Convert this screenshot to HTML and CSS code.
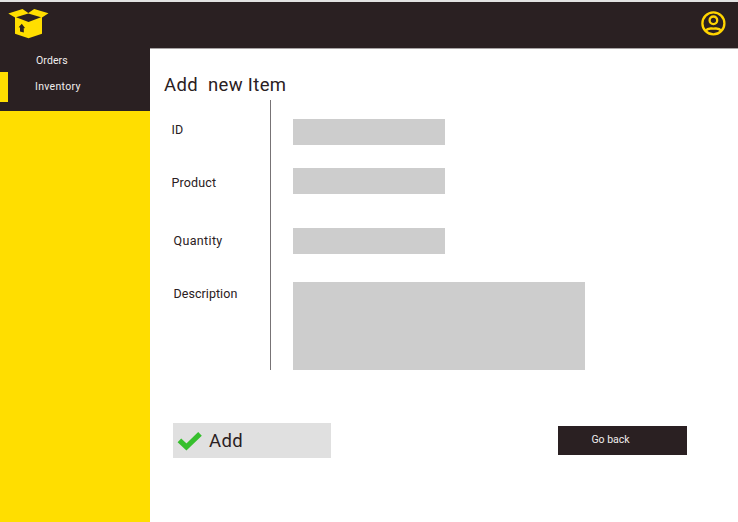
FILE: index.html
```html
<!DOCTYPE html>
<html lang="en">
<head>
<meta charset="utf-8">
<title>Add new Item</title>
<link rel="stylesheet" href="styles.css">
</head>
<body>
<header class="topbar">
  <svg class="logo" width="42" height="32" viewBox="0 0 42 32">
    <path fill="#ffde00" d="M0.3 5.6 14.5 1 20.3 5 26.2 1 40.5 5.2 34 9.5V25.8L20.5 30.3 7 25.8V9.5Z"/>
    <path fill="#2a2022" d="M8 9.3 20.3 5.4 33 9.3 20.5 14Z"/>
    <path fill="#2a2022" d="M13.8 15.8 17.2 20.2 15.8 20V24.4L12 23.6V19.4L10.6 19.2Z"/>
  </svg>
  <svg class="user" width="26" height="26" viewBox="0 0 26 26" fill="none" stroke="#ffd400" stroke-width="2.3">
    <circle cx="13.4" cy="13.4" r="11"/>
    <circle cx="13.4" cy="10.3" r="3.8"/>
    <path d="M5.8 20.5C7.9 17.6 10.4 18.6 13.4 18.6S18.9 17.6 21 20.5"/>
  </svg>
</header>
<div class="layout">
  <aside class="sidebar">
    <nav class="nav">
      <a class="nav-item orders">Orders</a>
      <a class="nav-item inventory active">Inventory</a>
    </nav>
  </aside>
  <main class="main">
    <h1 class="title">Add&nbsp; new Item</h1>
    <form class="form">
      <div class="labels">
        <label class="label id" for="id">ID</label>
        <label class="label product" for="product">Product</label>
        <label class="label quantity" for="quantity">Quantity</label>
        <label class="label description" for="description">Description</label>
      </div>
      <div class="fields">
        <input class="field" id="id">
        <input class="field second" id="product">
        <input class="field third" id="quantity">
        <textarea class="field area" id="description"></textarea>
      </div>
    </form>
    <div class="actions">
      <button class="add"><svg width="26" height="20" viewBox="0 0 26 20"><path d="M2.4 9.4 9.4 16 23 2.9" fill="none" stroke="#36bf2d" stroke-width="5.2"/></svg><span class="add-text">Add</span></button>
      <button class="back">Go back</button>
    </div>
  </main>
</div>
</body>
</html>
```

FILE: styles.css
```css
* { box-sizing: border-box; }
body {
  margin: 0;
  height: 522px;
  overflow: hidden;
  display: flex;
  flex-direction: column;
  background: #fff;
  color: #2a2022;
  font-family: Roboto, "Liberation Sans", sans-serif;
}
.topbar {
  flex: 0 0 48px;
  border-top: 2px solid #e2e2e2;
  background: #2a2022;
  display: flex;
  justify-content: space-between;
  padding: 6px 12px 0 8px;
}
.user { margin-top: 2px; }
.layout { flex: 1; display: flex; }
.sidebar { width: 150px; background: #ffde00; }
.nav {
  height: 63px;
  padding-top: 1px;
  background: #2a2022;
  display: flex;
  flex-direction: column;
}
.nav-item {
  color: #f1eeee;
  font-size: 10.5px;
  line-height: 24px;
}
.orders { height: 23px; padding-left: 36px; letter-spacing: 0.1px; }
.active {
  height: 30px;
  border-left: 8px solid #ffde00;
  padding-left: 27px;
  line-height: 30px;
  letter-spacing: 0.3px;
}
.main { flex: 1; padding-top: 25px; border-top: 1px solid #a7a3a4; }
.title {
  margin: -1px 0 0 14px;
  height: 27px;
  line-height: 24px;
  font-size: 18.5px;
  font-weight: 400;
  letter-spacing: 0.36px;
}
.form { display: flex; height: 270px; }
.labels {
  width: 121px;
  padding: 20px 0 0 21.5px;
  border-right: 1px solid #777375;
  display: flex;
  flex-direction: column;
}
.label { font-size: 12.5px; line-height: 20px; letter-spacing: 0.15px; }
.product { margin-top: 33px; }
.quantity { margin: 38px 0 0 2px; letter-spacing: 0.35px; }
.description { margin: 33px 0 0 2px; letter-spacing: 0.05px; }
.fields { padding: 19px 0 0 22px; display: flex; flex-direction: column; }
.field {
  width: 152px;
  height: 26px;
  padding: 0;
  border: 0;
  border-radius: 0;
  background: #cdcdcd;
  resize: none;
}
.second { margin-top: 23px; }
.third { margin-top: 34px; }
.area { width: 292px; height: 88px; margin-top: 28px; }
.actions {
  display: flex;
  justify-content: space-between;
  padding: 53px 51px 0 23px;
}
button { border: 0; font-family: inherit; }
.add {
  width: 158px;
  height: 35px;
  padding: 0 0 0 4px;
  display: flex;
  align-items: center;
  background: #e0e0e0;
  color: #2a2022;
  font-size: 18.5px;
}
.add-text { margin: 1px 0 0 6px; letter-spacing: 0.4px; }
.back {
  width: 129px;
  height: 29px;
  margin-top: 3px;
  padding: 0 24px 2px 0;
  background: #2a2022;
  color: #f1eeee;
  font-size: 10.5px;
}
```
